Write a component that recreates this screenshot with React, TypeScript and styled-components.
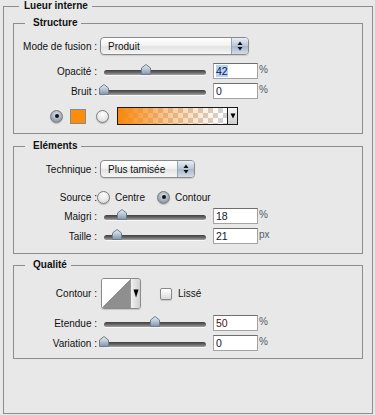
import React from 'react';
import styled, { createGlobalStyle } from 'styled-components';

const GlobalStyle = createGlobalStyle`
  html, body {
    margin: 0;
    padding: 0;
    background: #e8e8e8;
  }
  body {
    font-family: "Liberation Sans", Arial, sans-serif;
    font-size: 10px;
    color: #111;
  }
`;

const Panel = styled.fieldset`
  box-sizing: border-box;
  width: 370px;
  height: 414px;
  margin: 0 0 0 3px;
  padding: 0 9px;
  border: 1px solid #8d8d8d;
  min-inline-size: 0;
`;

const Legend = styled.legend<{ $ml: number; $pl: number }>`
  margin-left: ${(p) => p.$ml}px;
  padding: 0 4px 0 ${(p) => p.$pl}px;
  height: 12px;
  font-size: 10px;
  line-height: 12px;
  font-weight: bold;
  color: #111;
`;

const Group = styled.fieldset<{ $mt: number; $pt: number; $pb: number }>`
  margin: ${(p) => p.$mt}px 0 0;
  padding: ${(p) => p.$pt}px 0 ${(p) => p.$pb}px;
  border: 1px solid #8d8d8d;
  min-inline-size: 0;
`;

const Row = styled.div<{ $h: number; $mt?: number; $gap?: number }>`
  display: grid;
  grid-template-columns: 83px auto;
  column-gap: ${(p) => p.$gap ?? 3}px;
  align-items: center;
  height: ${(p) => p.$h}px;
  margin-top: ${(p) => p.$mt ?? 0}px;
`;

const Label = styled.span`
  text-align: right;
  white-space: nowrap;
`;

const Controls = styled.div<{ $gap?: number }>`
  display: flex;
  align-items: center;
  gap: ${(p) => p.$gap ?? 4}px;
  height: 100%;
`;

/* popup menu */
const Popup = styled.div<{ $w: number }>`
  box-sizing: border-box;
  width: ${(p) => p.$w}px;
  height: 18px;
  display: flex;
  align-items: center;
  border: 1px solid #8a8a8a;
  border-radius: 4px;
  background: linear-gradient(#ffffff, #f3f3f3 45%, #e3e3e3 55%, #f6f6f6);
  box-shadow: 0 1px 1px rgba(0, 0, 0, 0.12);
  overflow: hidden;
`;

const PopupText = styled.span`
  padding-left: 7px;
  flex: 1;
  color: #111;
`;

const Stepper = styled.div`
  width: 16px;
  height: 100%;
  display: flex;
  align-items: center;
  justify-content: center;
  border-left: 1px solid #98a3b0;
  background: linear-gradient(#e6edf5, #bcc8d6 48%, #a8b7c9 52%, #d4dde8);
`;

/* slider */
const SliderWrap = styled.div`
  position: relative;
  box-sizing: border-box;
  width: 110px;
  height: 16px;
  padding: 0 4px;
  display: flex;
  align-items: center;
`;

const Track = styled.div`
  flex: 1;
  height: 5px;
  margin-top: 3px;
  border-radius: 3px;
  background: linear-gradient(#3f3f3f, #6c6c6c 55%, #a4a4a4);
  box-shadow: 0 1px 0 rgba(255, 255, 255, 0.7);
`;

const Thumb = styled.svg`
  position: absolute;
  top: 1px;
`;

const NumBox = styled.div<{ $ink?: string }>`
  box-sizing: border-box;
  width: 45px;
  height: 16px;
  padding: 0 2px;
  background: #fff;
  border: 1px solid #a3a3a3;
  border-top-color: #6e6e6e;
  font-size: 10.5px;
  line-height: 14px;
  color: ${(p) => p.$ink ?? '#14142e'};
`;

const Selected = styled.span`
  background: #b4d3fb;
`;

const Unit = styled.span`
  align-self: flex-start;
  margin-top: 1px;
  margin-left: -2px;
  color: #555a66;
`;

/* radios, swatches */
const Radio = styled.span<{ $on?: boolean }>`
  box-sizing: border-box;
  width: 13px;
  height: 13px;
  border-radius: 50%;
  border: 1px solid #7b7b7b;
  display: inline-flex;
  align-items: center;
  justify-content: center;
  flex: none;
  background: ${(p) =>
    p.$on
      ? 'radial-gradient(circle at 50% 35%, #dfe5ec, #8d99a8 75%)'
      : 'radial-gradient(circle at 50% 30%, #ffffff, #e6e6e6 60%, #c9c9c9)'};
  box-shadow: 0 1px 1px rgba(0, 0, 0, 0.2);

  &::after {
    content: '';
    width: 4px;
    height: 4px;
    border-radius: 50%;
    background: #111;
    display: ${(p) => (p.$on ? 'block' : 'none')};
  }
`;

const Option = styled.span`
  display: inline-flex;
  align-items: center;
  gap: 5px;
`;

const ColorRow = styled.div`
  display: flex;
  align-items: center;
  height: 18px;
  margin-top: 8px;
  padding-left: 36px;
`;

const Swatch = styled.span<{ $c: string }>`
  box-sizing: border-box;
  width: 16px;
  height: 15px;
  margin: 0 10px 0 7px;
  background: ${(p) => p.$c};
  border: 1px solid #8b8b8b;
`;

const GradientBox = styled.div`
  box-sizing: border-box;
  display: flex;
  width: 121px;
  height: 18px;
  margin-left: 8px;
  border: 1px solid #1a1a1a;
`;

const GradientFill = styled.div`
  flex: 1;
  background: linear-gradient(90deg, #f7870d, rgba(247, 135, 13, 0.45) 45%, rgba(247, 135, 13, 0) 95%),
    conic-gradient(#ffffff 25%, #d2d2d2 0 50%, #ffffff 0 75%, #d2d2d2 0) 0 0 / 10px 10px;
`;

const DropButton = styled.div`
  width: 9px;
  display: flex;
  align-items: center;
  justify-content: center;
  border-left: 1px solid #1a1a1a;
  background: linear-gradient(#f6f6f6, #cdcdcd);
`;

const CurveBox = styled.div`
  box-sizing: border-box;
  display: flex;
  width: 40px;
  height: 31px;
  margin-left: 1px;
  border: 1px solid #8a8a8a;
  border-radius: 3px;
  overflow: hidden;
  box-shadow: 0 1px 1px rgba(0, 0, 0, 0.15);
`;

const CurveArea = styled.div`
  flex: 1;
  background: linear-gradient(to bottom right, #ffffff 50%, #8f8f8f 50%);
  border-right: 1px solid #9a9a9a;
`;

const CurveButton = styled.div`
  width: 9px;
  display: flex;
  align-items: center;
  justify-content: center;
  background: linear-gradient(90deg, #f2f2f2, #d0d0d0);
`;

const Check = styled.span`
  box-sizing: border-box;
  width: 12px;
  height: 12px;
  margin-left: 13px;
  border: 1px solid #888;
  border-radius: 2px;
  background: linear-gradient(#ffffff, #dadada);
  box-shadow: 0 1px 1px rgba(0, 0, 0, 0.15);
`;

const StepArrows = () => (
  <svg width="6" height="10" viewBox="0 0 6 10">
    <path d="M3 0.5 L5.5 4 H0.5 Z" fill="#111" />
    <path d="M3 9.5 L5.5 6 H0.5 Z" fill="#111" />
  </svg>
);

const DownArrow = ({ h = 6 }: { h?: number }) => (
  <svg width="6" height={h} viewBox={`0 0 6 ${h}`}>
    <path d={`M0.5 0.5 H5.5 L3 ${h - 0.5} Z`} fill="#000" />
  </svg>
);

const Slider = ({ value }: { value: number }) => (
  <SliderWrap>
    <Track />
    <Thumb width="10" height="11" viewBox="0 0 10 11" style={{ left: 4 + value * 101 - 5 }}>
      <defs>
        <linearGradient id="th" x1="0" y1="0" x2="0" y2="1">
          <stop offset="0" stopColor="#e9eff5" />
          <stop offset="0.55" stopColor="#b2c0cf" />
          <stop offset="1" stopColor="#8393a7" />
        </linearGradient>
      </defs>
      <path d="M5 0.5 L9.5 4 V10.5 H0.5 V4 Z" fill="url(#th)" stroke="#6d7c8f" strokeWidth="1" />
    </Thumb>
  </SliderWrap>
);

const SliderRow = ({
  label,
  value,
  text,
  unit,
  mt,
  ink,
  selected,
}: {
  label: string;
  value: number;
  text: string;
  unit: string;
  mt: number;
  ink?: string;
  selected?: boolean;
}) => (
  <Row $h={16} $mt={mt}>
    <Label>{label}</Label>
    <Controls $gap={3}>
      <Slider value={value} />
      <NumBox $ink={ink}>{selected ? <Selected>{text}</Selected> : text}</NumBox>
      <Unit>{unit}</Unit>
    </Controls>
  </Row>
);

export default function App() {
  return (
    <>
      <GlobalStyle />
      <Panel>
        <Legend $ml={6} $pl={5}>Lueur interne</Legend>

        <Group $mt={5} $pt={8} $pb={8}>
          <Legend $ml={11} $pl={8}>Structure</Legend>
          <Row $h={18}>
            <Label>Mode de fusion :</Label>
            <Controls>
              <Popup $w={149}>
                <PopupText>Produit</PopupText>
                <Stepper>
                  <StepArrows />
                </Stepper>
              </Popup>
            </Controls>
          </Row>
          <SliderRow label="Opacité :" value={0.42} text="42" unit="%" mt={8} selected />
          <SliderRow label="Bruit :" value={0} text="0" unit="%" mt={4} />
          <ColorRow>
            <Radio $on />
            <Swatch $c="#f88e0c" />
            <Radio />
            <GradientBox>
              <GradientFill />
              <DropButton>
                <DownArrow />
              </DropButton>
            </GradientBox>
          </ColorRow>
        </Group>

        <Group $mt={6} $pt={8} $pb={9}>
          <Legend $ml={11} $pl={8}>Eléments</Legend>
          <Row $h={18}>
            <Label>Technique :</Label>
            <Controls>
              <Popup $w={95}>
                <PopupText>Plus tamisée</PopupText>
                <Stepper>
                  <StepArrows />
                </Stepper>
              </Popup>
            </Controls>
          </Row>
          <Row $h={14} $mt={12} $gap={0}>
            <Label>Source :</Label>
            <Controls $gap={12}>
              <Option>
                <Radio />
                Centre
              </Option>
              <Option>
                <Radio $on />
                Contour
              </Option>
            </Controls>
          </Row>
          <SliderRow label="Maigri :" value={0.18} text="18" unit="%" mt={4} />
          <SliderRow label="Taille :" value={0.13} text="21" unit="px" mt={4} />
        </Group>

        <Group $mt={5} $pt={7} $pb={7}>
          <Legend $ml={11} $pl={8}>Qualité</Legend>
          <Row $h={31}>
            <Label>Contour :</Label>
            <Controls $gap={6}>
              <CurveBox>
                <CurveArea />
                <CurveButton>
                  <DownArrow h={9} />
                </CurveButton>
              </CurveBox>
              <Check />
              <span>Lissé</span>
            </Controls>
          </Row>
          <SliderRow label="Etendue :" value={0.5} text="50" unit="%" mt={6} ink="#4a1612" />
          <SliderRow label="Variation :" value={0} text="0" unit="%" mt={4} />
        </Group>
      </Panel>
    </>
  );
}
